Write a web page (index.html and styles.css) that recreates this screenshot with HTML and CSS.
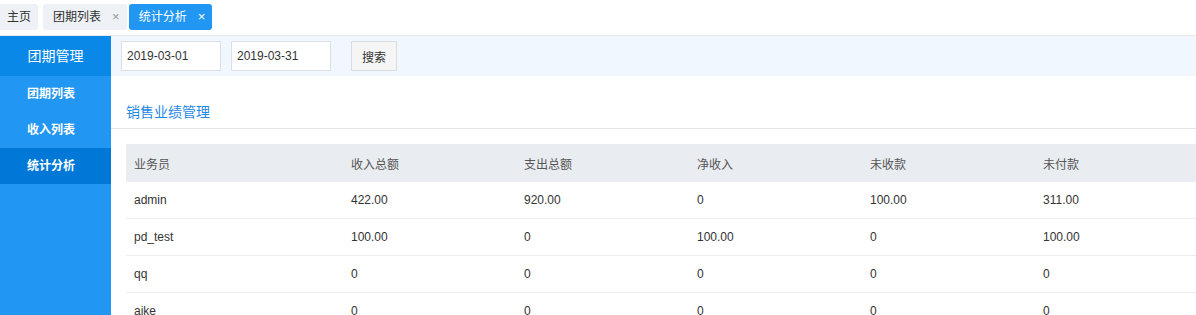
FILE: index.html
```html
<!DOCTYPE html>
<html lang="zh-CN">
<head>
<meta charset="UTF-8">
<title>统计分析</title>
<link rel="stylesheet" href="styles.css">
</head>
<body>
<div class="tabs">
    <div class="tab">主页</div>
    <div class="tab">团期列表<span class="close">×</span></div>
    <div class="tab active">统计分析<span class="close">×</span></div>
</div>
<div class="main">
    <div class="sidebar">
        <div class="side-title">团期管理</div>
        <div class="side-item">团期列表</div>
        <div class="side-item">收入列表</div>
        <div class="side-item current">统计分析</div>
    </div>
    <div class="content">
        <div class="filter">
            <input type="text" class="date" value="2019-03-01">
            <input type="text" class="date" value="2019-03-31">
            <button class="search">搜索</button>
        </div>
        <div class="section-title">销售业绩管理</div>
        <table class="grid">
            <thead>
                <tr><th class="c1">业务员</th><th>收入总额</th><th>支出总额</th><th>净收入</th><th>未收款</th><th>未付款</th></tr>
            </thead>
            <tbody>
                <tr><td>admin</td><td>422.00</td><td>920.00</td><td>0</td><td>100.00</td><td>311.00</td></tr>
                <tr><td>pd_test</td><td>100.00</td><td>0</td><td>100.00</td><td>0</td><td>100.00</td></tr>
                <tr><td>qq</td><td>0</td><td>0</td><td>0</td><td>0</td><td>0</td></tr>
                <tr><td>aike</td><td>0</td><td>0</td><td>0</td><td>0</td><td>0</td></tr>
            </tbody>
        </table>
    </div>
</div>
</body>
</html>
```

FILE: styles.css
```css
/* statistics page */
body {
    margin: 0;
    font-family: "Liberation Sans", "Noto Sans CJK SC", sans-serif;
    font-size: 12px;
    color: #333;
    background: #fff;
    overflow: hidden;
}
.tabs {
    display: flex;
    gap: 5px;
    height: 36px;
    padding-top: 4px;
    box-sizing: border-box;
    border-bottom: 1px solid #e6e8ec;
}
.tab {
    height: 26px;
    line-height: 26px;
    padding: 0 7px;
    background: #eef1f5;
    border-radius: 3px;
    color: #333;
}
.tab:first-child {
    border-top-left-radius: 0;
    border-bottom-left-radius: 0;
}
.tab:nth-child(2) {
    padding: 0 7px 0 10px;
}
.tab.active {
    background: #2196f3;
    color: #fff;
    padding: 0 7px 0 10px;
    margin-left: -3px;
}
.close {
    margin-left: 11px;
    color: #999;
    font-size: 13px;
}
.tab.active .close {
    color: #fff;
}
.main {
    display: flex;
    height: 279px;
}
.sidebar {
    width: 111px;
    flex-shrink: 0;
    background: #2196f3;
    color: #fff;
}
.side-title {
    height: 40px;
    line-height: 40px;
    background: #0a88e8;
    text-align: center;
    font-size: 14px;
}
.side-item {
    height: 36px;
    line-height: 36px;
    padding-left: 27px;
    font-weight: bold;
}
.side-item.current {
    background: #0078d7;
}
.content {
    flex: 1;
    min-width: 0;
}
.filter {
    height: 40px;
    background: #f0f7fe;
    display: flex;
    align-items: center;
    padding-left: 10px;
    gap: 10px;
}
.date {
    width: 100px;
    height: 30px;
    box-sizing: border-box;
    border: 1px solid #dcdfe3;
    padding: 0 5px;
    font-family: "Liberation Sans", "Noto Sans CJK SC", sans-serif;
    font-size: 12px;
    color: #333;
    margin: 0;
}
.search {
    margin-left: 10px;
    width: 46px;
    height: 30px;
    background: #f5f5f5;
    border: 1px solid #dcdcdc;
    font-family: "Liberation Sans", "Noto Sans CJK SC", sans-serif;
    font-size: 12px;
    color: #333;
}
.section-title {
    height: 53px;
    line-height: 20px;
    padding: 26px 0 0 15px;
    box-sizing: border-box;
    color: #1e88e5;
    font-size: 14px;
    border-bottom: 1px solid #e2e4e8;
}
.grid {
    margin: 15px 0 0 15px;
    border-collapse: collapse;
    table-layout: fixed;
    width: 1082px;
}
.grid th, .grid td {
    text-align: left;
    padding: 0 8px;
    width: 157px;
    font-weight: normal;
}
.grid th.c1 {
    width: 201px;
}
.grid th {
    height: 38px;
    background: #e9ecf0;
    color: #555;
}
.grid td {
    height: 36px;
    border-bottom: 1px solid #eceef1;
}
```
